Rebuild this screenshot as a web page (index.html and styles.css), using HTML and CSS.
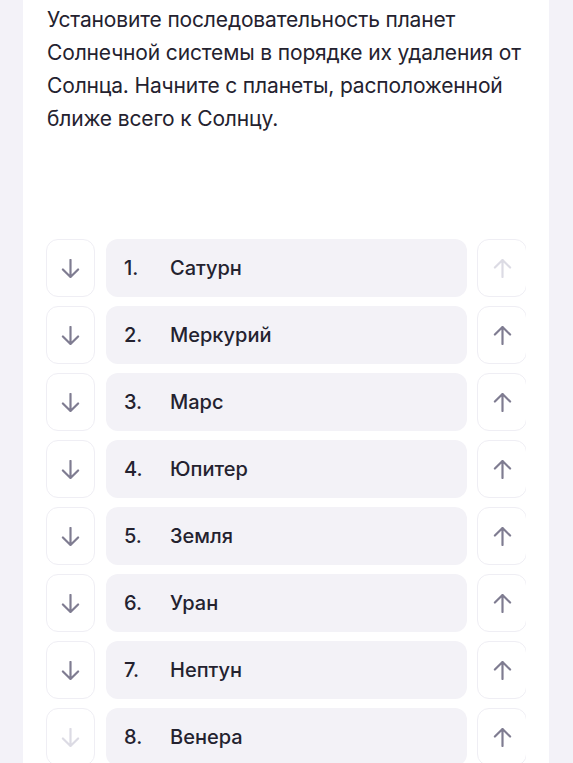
FILE: index.html
```html
<!DOCTYPE html>
<html>
<head>
  <title>Порядок планет</title>
  <link rel="stylesheet" href="styles.css">
</head>
<body>
  <div class="card">
    <p class="question">Установите последовательность планет Солнечной системы в порядке их удаления от Солнца. Начните с планеты, расположенной ближе всего к Солнцу.</p>

    <div class="order-list">
      <div class="order-row">
        <button class="move-btn"><svg viewBox="0 0 20 20"><path d="M10 1v18M2 11l8 8 8-8"/></svg></button>
        <div class="item"><span class="num">1.</span><span class="name">Сатурн</span></div>
        <button class="move-btn disabled"><svg viewBox="0 0 20 20"><path d="M10 19V1M2 9l8-8 8 8"/></svg></button>
      </div>
      <div class="order-row">
        <button class="move-btn"><svg viewBox="0 0 20 20"><path d="M10 1v18M2 11l8 8 8-8"/></svg></button>
        <div class="item"><span class="num">2.</span><span class="name">Меркурий</span></div>
        <button class="move-btn"><svg viewBox="0 0 20 20"><path d="M10 19V1M2 9l8-8 8 8"/></svg></button>
      </div>
      <div class="order-row">
        <button class="move-btn"><svg viewBox="0 0 20 20"><path d="M10 1v18M2 11l8 8 8-8"/></svg></button>
        <div class="item"><span class="num">3.</span><span class="name">Марс</span></div>
        <button class="move-btn"><svg viewBox="0 0 20 20"><path d="M10 19V1M2 9l8-8 8 8"/></svg></button>
      </div>
      <div class="order-row">
        <button class="move-btn"><svg viewBox="0 0 20 20"><path d="M10 1v18M2 11l8 8 8-8"/></svg></button>
        <div class="item"><span class="num">4.</span><span class="name">Юпитер</span></div>
        <button class="move-btn"><svg viewBox="0 0 20 20"><path d="M10 19V1M2 9l8-8 8 8"/></svg></button>
      </div>
      <div class="order-row">
        <button class="move-btn"><svg viewBox="0 0 20 20"><path d="M10 1v18M2 11l8 8 8-8"/></svg></button>
        <div class="item"><span class="num">5.</span><span class="name">Земля</span></div>
        <button class="move-btn"><svg viewBox="0 0 20 20"><path d="M10 19V1M2 9l8-8 8 8"/></svg></button>
      </div>
      <div class="order-row">
        <button class="move-btn"><svg viewBox="0 0 20 20"><path d="M10 1v18M2 11l8 8 8-8"/></svg></button>
        <div class="item"><span class="num">6.</span><span class="name">Уран</span></div>
        <button class="move-btn"><svg viewBox="0 0 20 20"><path d="M10 19V1M2 9l8-8 8 8"/></svg></button>
      </div>
      <div class="order-row">
        <button class="move-btn"><svg viewBox="0 0 20 20"><path d="M10 1v18M2 11l8 8 8-8"/></svg></button>
        <div class="item"><span class="num">7.</span><span class="name">Нептун</span></div>
        <button class="move-btn"><svg viewBox="0 0 20 20"><path d="M10 19V1M2 9l8-8 8 8"/></svg></button>
      </div>
      <div class="order-row">
        <button class="move-btn disabled"><svg viewBox="0 0 20 20"><path d="M10 1v18M2 11l8 8 8-8"/></svg></button>
        <div class="item"><span class="num">8.</span><span class="name">Венера</span></div>
        <button class="move-btn"><svg viewBox="0 0 20 20"><path d="M10 19V1M2 9l8-8 8 8"/></svg></button>
      </div>
    </div>
  </div>
</body>
</html>
```

FILE: styles.css
```css
html, body {
  margin: 0;
  padding: 0;
  height: 763px;
  overflow: hidden;
  background-color: #f3f2f8;
}

body {
  font-family: Inter, "Noto Sans", sans-serif;
  color: #24222f;
}

.card {
  margin: 0 24px 0 23px;
  padding: 0 23px 40px 24px;
  background-color: #fff;
  min-height: 763px;
  box-sizing: border-box;
}

.question {
  margin: 0;
  padding-top: 3px;
  font-size: 21px;
  line-height: 33px;
  letter-spacing: -0.15px;
}

.order-list {
  margin-top: 104px;
  width: 480px;
  margin-left: -1px;
  overflow: hidden;
  display: flex;
  flex-direction: column;
  gap: 9px;
}

.order-row {
  display: flex;
  align-items: stretch;
  height: 58px;
  width: 481px;
}

.move-btn {
  flex: 0 0 auto;
  width: 49px;
  height: 58px;
  padding: 0;
  background: #fff;
  border: 1px solid #efeef4;
  border-radius: 12px;
  display: flex;
  align-items: center;
  justify-content: center;
  cursor: pointer;
}

.move-btn:last-child {
  width: 50px;
}

.move-btn svg {
  width: 19px;
  height: 19px;
  fill: none;
  stroke: #7f7c91;
  stroke-width: 2.3;
  stroke-linecap: round;
  stroke-linejoin: round;
}

.move-btn.disabled svg {
  stroke: #dcdbe4;
}

.item {
  flex: 1;
  margin: 0 10px 0 11px;
  background-color: #f3f2f7;
  border-radius: 12px;
  display: flex;
  align-items: center;
  padding-left: 18px;
  font-size: 20px;
  font-weight: 500;
}

.num {
  width: 46px;
}
```
